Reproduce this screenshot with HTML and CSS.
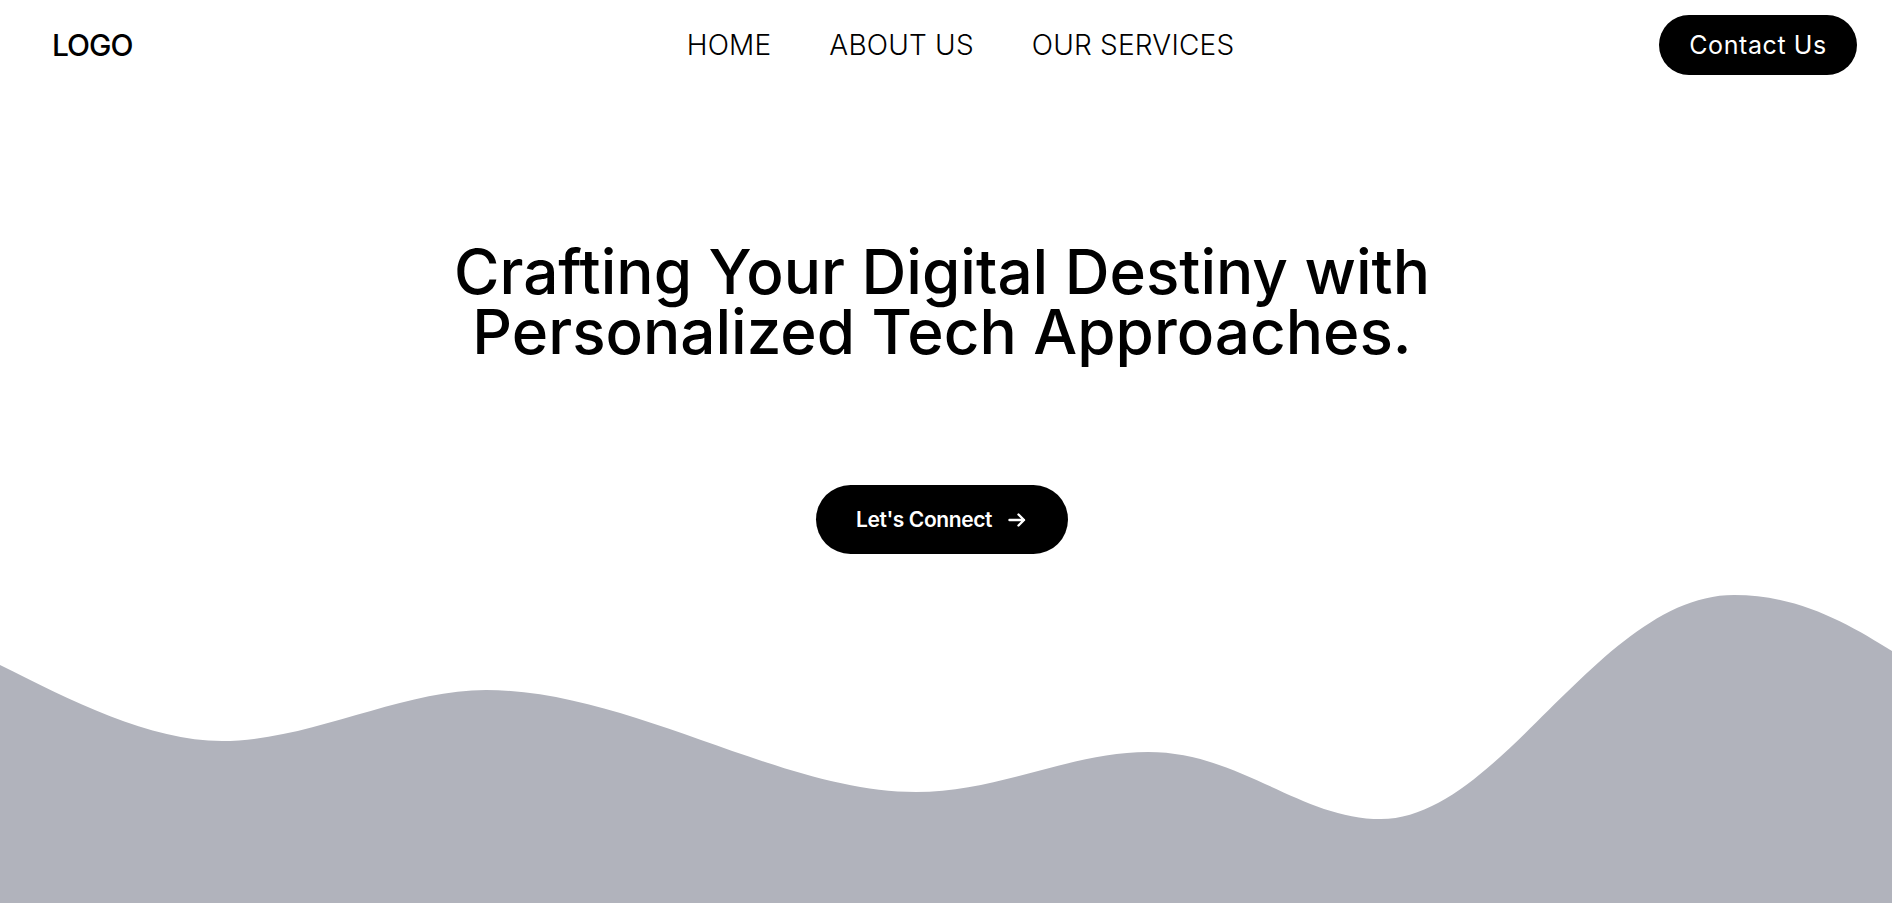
FILE: index.html
```html
<!DOCTYPE html>
<html lang="en">
<head>
<meta charset="utf-8">
<title>Landing</title>
<link rel="stylesheet" href="styles.css">
</head>
<body>
<div class="page">
  <header class="header">
    <div class="brand"><span class="logo">LOGO</span></div>
    <nav class="nav">
      <a href="#" class="nav-link">HOME</a>
      <a href="#" class="nav-link">ABOUT US</a>
      <a href="#" class="nav-link">OUR SERVICES</a>
    </nav>
    <div class="actions"><a href="#" class="contact-btn">Contact Us</a></div>
  </header>
  <main class="hero">
    <h1 class="hero-title">Crafting Your Digital Destiny with<br>Personalized Tech Approaches.</h1>
    <a href="#" class="cta-btn">Let's Connect
      <svg class="cta-arrow" width="18" height="14" viewBox="0 0 18 14" fill="none" stroke="#fff" stroke-width="2.4" stroke-linecap="round" stroke-linejoin="round"><path d="M1.5 7H16M10.5 1.5L16 7l-5.5 5.5"/></svg>
    </a>
  </main>
  <svg class="wave" viewBox="0 572 1892 331" preserveAspectRatio="none" xmlns="http://www.w3.org/2000/svg">
    <path fill="#b1b3bc" d="M0,665 C70,700 150,741 222,741 C310,741 400,690 486,690 C630,690 780,792 916,792 C1000,792 1070,752 1148,752 C1240,752 1300,819 1381,819 C1500,819 1600,595 1734,595 C1800,595 1850,625 1892,651 L1892,903 L0,903 Z"/>
  </svg>
</div>
</body>
</html>
```

FILE: styles.css
```css
* { box-sizing: border-box; }
html, body { margin: 0; padding: 0; background: #fff; }
body { font-family: Inter, "Open Sans", "Liberation Sans", sans-serif; color: #000; }
a { text-decoration: none; color: inherit; }

.page {
  height: 903px;
  display: flex;
  flex-direction: column;
  overflow: hidden;
}

.header {
  height: 90px;
  flex: none;
  display: flex;
  align-items: center;
  padding: 0 35px 0 52px;
}
.brand { flex: 1; display: flex; }
.logo {
  font-size: 30px;
  font-weight: 500;
  letter-spacing: -1px;
}
.nav {
  display: flex;
  gap: 58px;
  margin-left: 12px;
}
.nav-link {
  font-size: 28px;
  font-weight: 300;
  letter-spacing: 0.2px;
}
.actions { flex: 1; display: flex; justify-content: flex-end; }
.contact-btn {
  display: inline-flex;
  align-items: center;
  justify-content: center;
  width: 198px;
  height: 60px;
  border-radius: 30px;
  background: #000;
  color: #fff;
  font-size: 25px;
  font-weight: 400;
  letter-spacing: 0.6px;
}

.hero {
  flex: 1;
  display: flex;
  flex-direction: column;
  align-items: center;
  padding: 152px 8px 0 0;
}
.hero-title {
  margin: 0;
  text-align: center;
  font-size: 62px;
  line-height: 60px;
  font-weight: 500;
  letter-spacing: 0;
}
.cta-btn {
  margin-top: 123px;
  display: inline-flex;
  align-items: center;
  gap: 16px;
  height: 69px;
  padding: 0 42px 0 40px;
  border-radius: 35px;
  background: #000;
  color: #fff;
  font-size: 21px;
  font-weight: 600;
  letter-spacing: -0.4px;
}
.cta-arrow { display: block; }

.wave {
  display: block;
  flex: none;
  width: 100%;
  height: 331px;
}
```
